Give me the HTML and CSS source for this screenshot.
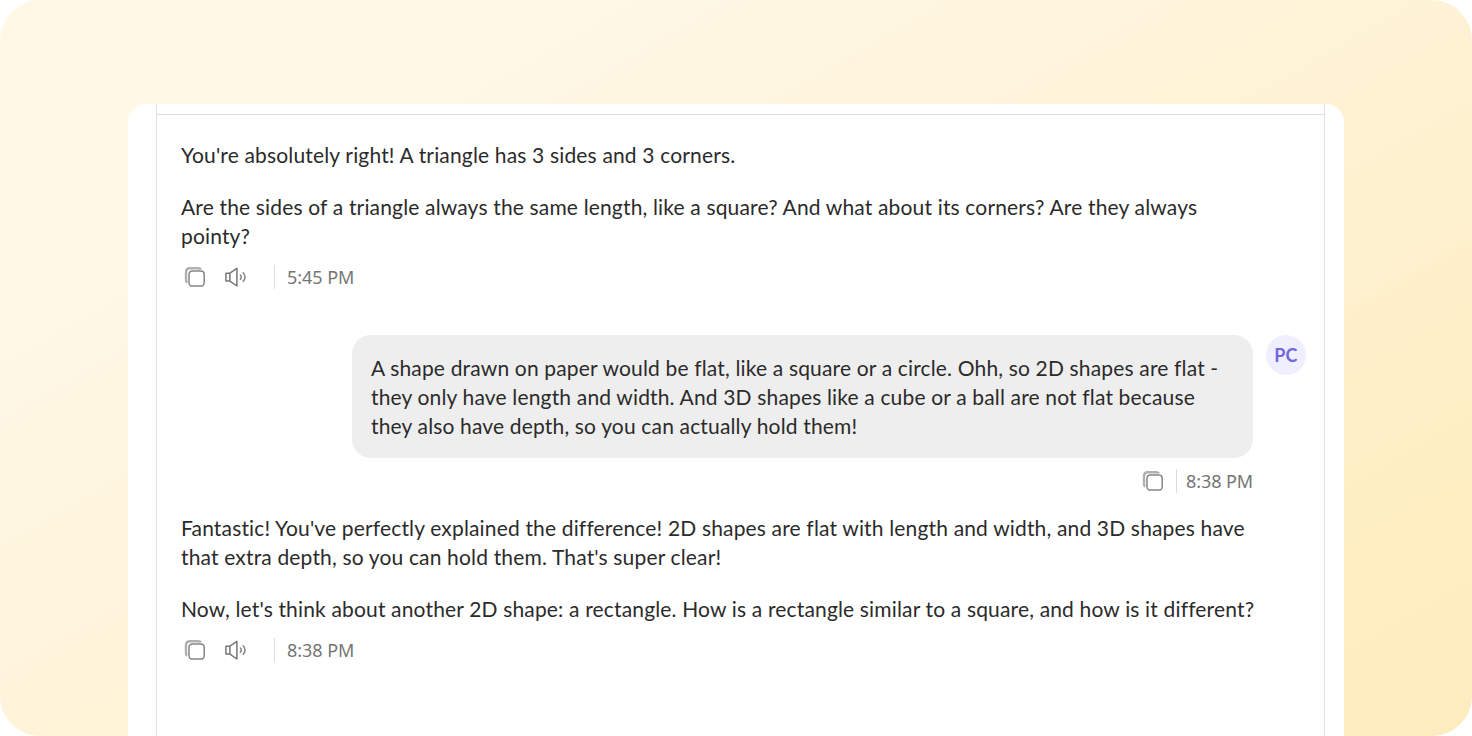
FILE: index.html
```
<!DOCTYPE html>
<html lang="en">
<head>
    <meta charset="UTF-8">
    <meta name="viewport" content="width=device-width, initial-scale=1.0">
    <title>Chat</title>
    <link rel="stylesheet" href="styles.css">
</head>
<body>
    <!-- shared icons -->
    <svg class="sprite" aria-hidden="true">
        <symbol id="icon-copy" viewBox="0 0 22 22">
            <path d="M3 16.8C2.2 16.2 2 15.2 2 13.8V6.4C2 3.4 3.4 2.2 6 2.2h8c1.6 0 2.5.4 3 1.2" fill="none" stroke="#b0b0b0" stroke-width="2.4"/>
            <rect x="5" y="4.9" width="15.2" height="15.2" rx="3.4" fill="#fff" stroke="#858585" stroke-width="1.5"/>
        </symbol>
        <symbol id="icon-sound" viewBox="0 0 24 22">
            <path d="M1.9 7.2h4L12.9 2.4v17.6L5.9 15.1h-4zM5.9 7.2v7.9" fill="none" stroke="#777" stroke-width="1.5" stroke-linejoin="round"/>
            <path d="M16.4 9c1.2 1.2 1.2 2.9 0 4.1M19.2 6.8c2.4 2.4 2.4 6.1 0 8.5" fill="none" stroke="#888" stroke-width="1.6" stroke-linecap="round"/>
        </symbol>
    </svg>

    <div class="stage">
        <div class="panel">
            <div class="chat">
                <div class="chat-top"></div>
                <div class="messages">
                    <div class="message">
                        <p>You're absolutely right! A triangle has 3 sides and 3 corners.</p>
                        <p>Are the sides of a triangle always the same length, like a square? And what about its corners? Are they always<br>pointy?</p>
                        <div class="meta">
                            <svg class="icon-copy"><use href="#icon-copy"/></svg>
                            <svg class="icon-sound"><use href="#icon-sound"/></svg>
                            <span class="time">5:45 PM</span>
                        </div>
                    </div>

                    <div class="message-user">
                        <div class="user-body">
                            <div class="bubble">A shape drawn on paper would be flat, like a square or a circle. Ohh, so 2D shapes are flat -<br>they only have length and width. And 3D shapes like a cube or a ball are not flat because<br>they also have depth, so you can actually hold them!</div>
                            <div class="meta">
                                <svg class="icon-copy"><use href="#icon-copy"/></svg>
                                <span class="time">8:38 PM</span>
                            </div>
                        </div>
                        <div class="avatar">PC</div>
                    </div>

                    <div class="message">
                        <p>Fantastic! You've perfectly explained the difference! 2D shapes are flat with length and width, and 3D shapes have<br>that extra depth, so you can hold them. That's super clear!</p>
                        <p>Now, let's think about another 2D shape: a rectangle. How is a rectangle similar to a square, and how is it different?</p>
                        <div class="meta">
                            <svg class="icon-copy"><use href="#icon-copy"/></svg>
                            <svg class="icon-sound"><use href="#icon-sound"/></svg>
                            <span class="time">8:38 PM</span>
                        </div>
                    </div>
                </div>
            </div>
        </div>
    </div>
</body>
</html>
```
FILE: styles.css
```
* { box-sizing: border-box; }

html, body {
    margin: 0;
    padding: 0;
    height: 100%;
}

body {
    background-color: #fff;
    color: #2b2b2b;
    font-family: Lato, "Open Sans", sans-serif;
    font-size: 21px;
    line-height: 29px;
    letter-spacing: 0.16px;
    overflow: hidden;
}

.sprite { display: none; }

.stage {
    height: 736px;
    padding: 104px 128px 0;
    border-radius: 40px;
    background: linear-gradient(150deg, #fff8e5 0%, #fff8e5 22%, #fff5df 36%, #fff3d7 50%, #fef0cb 70%, #feeec1 86%, #fdecbd 100%);
}

.panel {
    height: 632px;
    padding: 0 19px 0 28px;
    border-radius: 18px 18px 0 0;
    background-color: #fff;
}

.chat {
    height: 100%;
    border-left: 1px solid #dedede;
    border-right: 1px solid #dedede;
}

.chat-top {
    height: 11px;
    border-bottom: 1px solid #dedede;
}

.messages { padding: 25px 18px 0 24px; }

p {
    margin: 0 0 23px;
    white-space: nowrap;
}
.message p:last-of-type { margin-bottom: 0; }

/* icons and time under a message */
.meta {
    display: flex;
    align-items: center;
    height: 24px;
    margin-top: 15px;
}
.icon-copy { width: 22px; height: 22px; margin-left: 3px; }
.icon-sound { width: 24px; height: 22px; margin-left: 18px; }

.time {
    margin-left: 26px;
    padding-left: 12px;
    border-left: 1px solid #dcdcdc;
    color: #757575;
    font-family: "Noto Sans", sans-serif;
    font-size: 18px;
    line-height: 24px;
    letter-spacing: -0.05px;
}

/* user message */
.message-user {
    display: flex;
    justify-content: flex-end;
    gap: 13px;
    margin: 46px 0 20px;
}

.bubble {
    width: 901px;
    padding: 18px 0 18px 19px;
    border-radius: 19px;
    background-color: #eee;
    white-space: nowrap;
}

.user-body .meta { justify-content: flex-end; margin-top: 11px; }
.user-body .time { margin-left: 12px; padding-left: 9px; letter-spacing: -0.1px; }

.avatar {
    width: 40px;
    height: 40px;
    border-radius: 50%;
    background-color: #f0efff;
    color: #7169dc;
    font-size: 18px;
    font-weight: bold;
    line-height: 41px;
    text-align: center;
}
```
